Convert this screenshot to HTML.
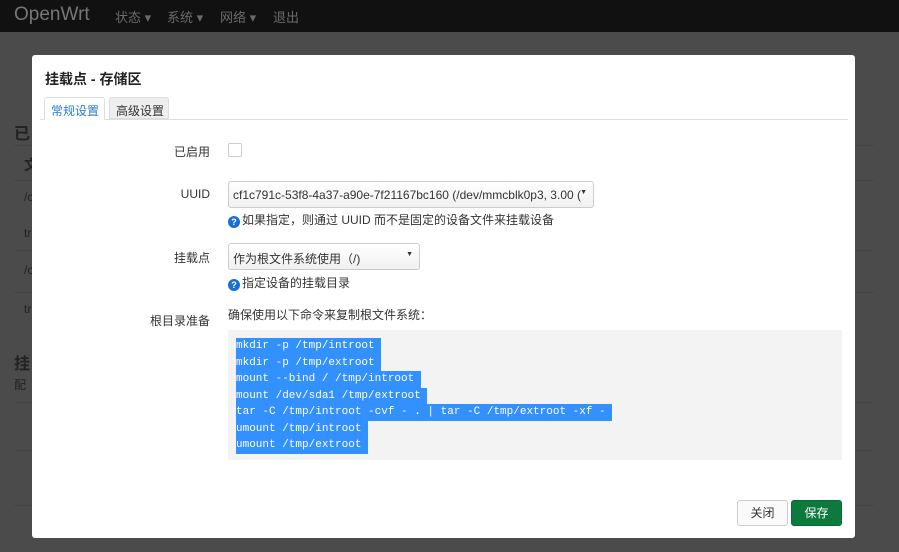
<!DOCTYPE html>
<html><head><meta charset="utf-8"><style>
*{box-sizing:border-box;margin:0;padding:0}
body{width:899px;height:552px;overflow:hidden;background:#4b4b4b;font-family:"Liberation Sans","Noto Sans CJK SC",sans-serif;font-size:12px;color:#333;position:relative}
.nav{position:absolute;left:0;top:0;width:899px;height:32px;background:#111}
.nav .b{position:absolute;left:14px;top:4px;font-size:19px;color:#777}
.nav .m{position:absolute;top:7px;font-size:13px;color:#6a6a6a}
.bgt{position:absolute;color:#222;font-size:14px}
.line{position:absolute;left:14px;width:860px;height:1px;background:#444}
.modal{position:absolute;left:32px;top:55px;width:823px;height:483px;background:#fff;border-radius:3px}
.abs{position:absolute}
.lbl{position:absolute;right:645px;font-size:12px;color:#333;text-align:right;white-space:nowrap}
.sel{position:absolute;border:1px solid #ccc;border-radius:3px;background:linear-gradient(#fff,#f0f0f0);font-size:12px;padding:6px 0 0 4px;white-space:nowrap;overflow:hidden}
.sel .ar{position:absolute;right:6px;top:7px;font-size:7px}
.help{position:absolute;font-size:12px;white-space:nowrap}
.q{display:inline-block;width:12px;height:12px;border-radius:50%;background:#1a6fd0;color:#fff;font-size:9px;text-align:center;line-height:12px;font-weight:bold;margin-right:2px;vertical-align:-1px}
pre{position:absolute;left:196px;top:275px;width:614px;height:130px;background:#f3f3f3;padding:8px 0 0 8px;font-family:"Liberation Mono",monospace;font-size:11px;line-height:16.5px;color:#fff}
pre span{background:#3390ff;display:inline-block;height:16.5px;vertical-align:top}
.btn{position:absolute;top:445px;height:26px;border-radius:3px;font-size:12px;text-align:center;line-height:24px}
</style></head><body>
<div class="nav"><span class="b">OpenWrt</span>
<span class="m" style="left:115px">状态 ▾</span><span class="m" style="left:167px">系统 ▾</span><span class="m" style="left:220px">网络 ▾</span><span class="m" style="left:273px">退出</span></div>
<div class="bgt" style="left:14px;top:120px;font-size:16px;font-weight:bold">已</div>
<div class="bgt" style="left:24px;top:155px;font-weight:bold">文</div>
<div class="bgt" style="left:24px;top:190px;font-size:12px">/c</div>
<div class="bgt" style="left:24px;top:226px;font-size:12px">tr</div>
<div class="bgt" style="left:24px;top:263px;font-size:12px">/c</div>
<div class="bgt" style="left:24px;top:302px;font-size:12px">tr</div>
<div class="bgt" style="left:14px;top:350px;font-size:16px;font-weight:bold">挂</div>
<div class="bgt" style="left:14px;top:376px;font-size:12px">配</div>
<div class="line" style="top:145px"></div><div class="line" style="top:180px"></div><div class="line" style="top:250px"></div><div class="line" style="top:292px"></div><div class="line" style="top:402px"></div><div class="line" style="top:450px"></div><div class="line" style="top:505px"></div>
<div class="modal">
<div class="abs" style="left:13px;top:14px;font-size:14px;font-weight:bold;color:#222">挂载点 - 存储区</div>
<div class="abs" style="left:8px;top:64px;width:808px;height:1px;background:#ddd"></div>
<div class="abs" style="left:12px;top:42px;width:61px;height:23px;border:1px solid #ddd;border-bottom-color:#fff;background:#fff;border-radius:3px 3px 0 0;color:#2a7bd0;font-size:12px;padding:4px 0 0 6px">常规设置</div>
<div class="abs" style="left:77px;top:42px;width:60px;height:22px;border:1px solid #ddd;background:#eee;border-radius:3px 3px 0 0;font-size:12px;padding:4px 0 0 6px">高级设置</div>
<div class="lbl" style="top:88px">已启用</div>
<div class="abs" style="left:196px;top:88px;width:14px;height:14px;border:1px solid #ccc;border-radius:2px"></div>
<div class="lbl" style="top:132px">UUID</div>
<div class="sel" style="left:196px;top:126px;width:366px;height:27px">cf1c791c-53f8-4a37-a90e-7f21167bc160 (/dev/mmcblk0p3, 3.00 (<span class="ar">▼</span></div>
<div class="help" style="left:196px;top:156px"><span class="q">?</span>如果指定，则通过 UUID 而不是固定的设备文件来挂载设备</div>
<div class="lbl" style="top:194px">挂载点</div>
<div class="sel" style="left:196px;top:188px;width:192px;height:27px">作为根文件系统使用（/)<span class="ar">▼</span></div>
<div class="help" style="left:196px;top:219px"><span class="q">?</span>指定设备的挂载目录</div>
<div class="lbl" style="top:257px">根目录准备</div>
<div class="help" style="left:196px;top:251px">确保使用以下命令来复制根文件系统：</div>
<pre><span>mkdir -p /tmp/introot </span>
<span>mkdir -p /tmp/extroot </span>
<span>mount --bind / /tmp/introot </span>
<span>mount /dev/sda1 /tmp/extroot </span>
<span>tar -C /tmp/introot -cvf - . | tar -C /tmp/extroot -xf - </span>
<span>umount /tmp/introot </span>
<span>umount /tmp/extroot </span></pre>
<div class="btn" style="left:705px;width:51px;border:1px solid #ccc;background:#fafafa">关闭</div>
<div class="btn" style="left:759px;width:51px;background:#0d7a3d;color:#fff;border:1px solid #0a6a34">保存</div>
</div>
</body></html>
